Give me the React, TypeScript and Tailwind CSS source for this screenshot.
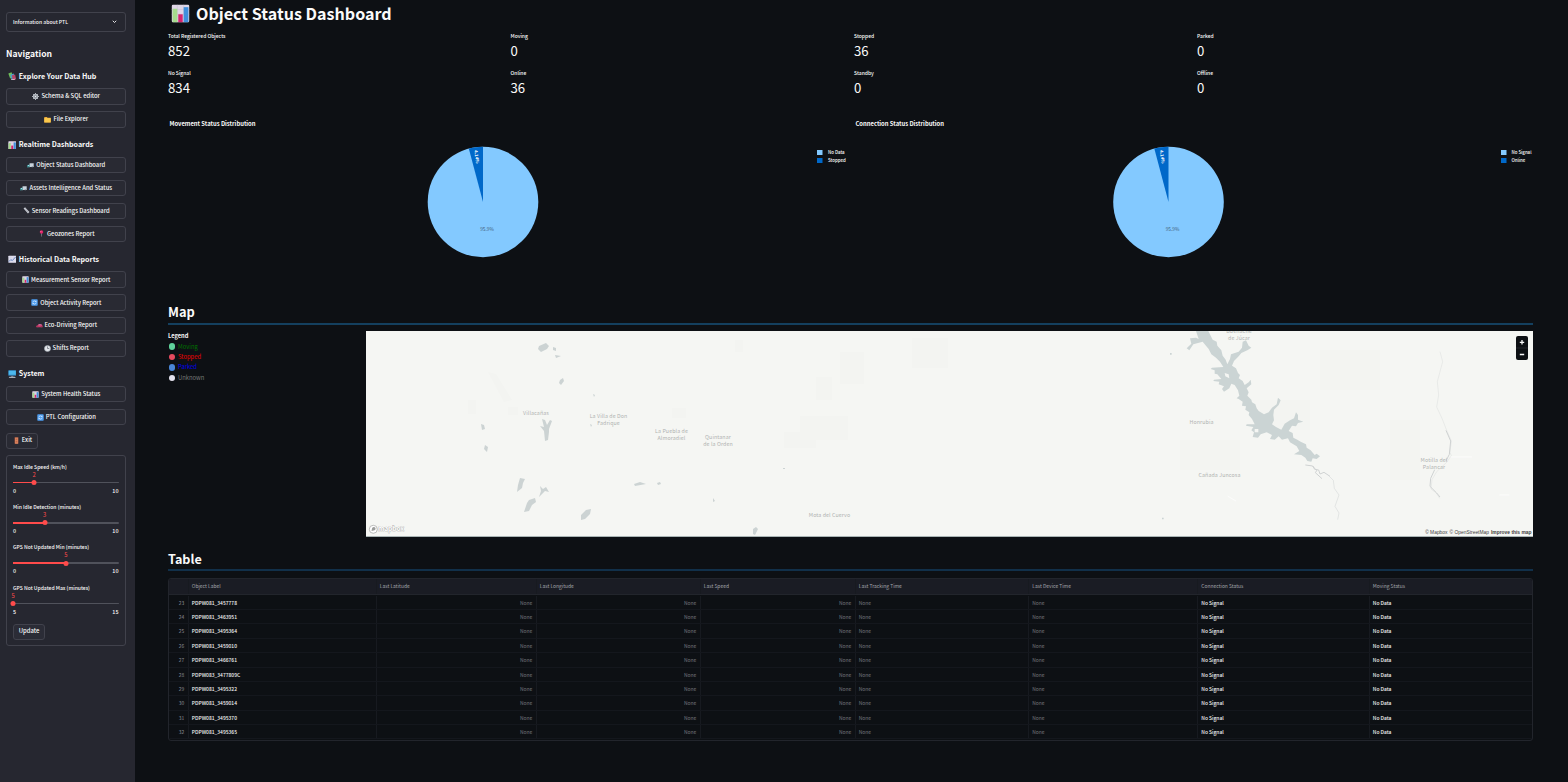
import React from "react";

type IconName =
  | "chart" | "books" | "gear" | "folder" | "truck" | "ruler" | "pin" | "trend"
  | "refresh" | "car" | "clock" | "monitor" | "door";

const drawings: Record<IconName, React.ReactNode> = {
  chart: (
    <>
      <rect x="1" y="1" width="22" height="22" rx="1.5" fill="#dfd6e6" />
      <path d="M1 7h22M1 13h22M8 1v22M16 1v22" stroke="#c9bfd6" strokeWidth=".7" />
      <rect x="2" y="6" width="6" height="17" fill="#a5dc8c" />
      <rect x="9.2" y="13" width="5.6" height="10" fill="#d6246e" />
      <rect x="16" y="4" width="6" height="19" fill="#3f8fdc" />
    </>
  ),
  books: (
    <>
      <path d="M1 4l9-3 5 14-9 3z" fill="#6fbf5a" />
      <path d="M6 8l10-4 4 14-10 3z" fill="#4aa3c9" />
      <path d="M11 9l9-2 3 13-10 3z" fill="#b5476a" />
      <path d="M8 21l12-2v2l-11 2z" fill="#e6e1ea" />
    </>
  ),
  gear: (
    <>
      <circle cx="12" cy="12" r="7.500" fill="#8d929b" stroke="#c3c9d0" strokeWidth="3.4" />
      <path d="M12 0v4M12 20v4M0 12h4M20 12h4M3.5 3.5l3 3M17.500 17.500l3 3M20.500 3.500l-3 3M3.500 20.500l3-3" stroke="#c3c9d0" strokeWidth="3" />
      <circle cx="12" cy="12" r="2.600" fill="#e6e9ec" />
    </>
  ),
  folder: (
    <>
      <path d="M1 3h9l2 3h11v16H1z" fill="#e9a73a" />
      <path d="M1 7h22v15H1z" fill="#fbc84c" />
    </>
  ),
  truck: (
    <>
      <path d="M9 4h14v13H7z" fill="#c9d3dc" />
      <path d="M3 9h6v10H1v-6z" fill="#3d9c9c" />
      <path d="M3.500 10.500h4v3H2z" fill="#9fe0ee" />
      <circle cx="6" cy="19" r="2.500" fill="#3f4650" />
      <circle cx="18" cy="18" r="2.500" fill="#3f4650" />
    </>
  ),
  ruler: (
    <>
      <path d="M2 5l5-4 15 16-5 5z" fill="#c9ccd4" />
      <path d="M9 6l-3 2M13 10l-3 2M17 14l-3 2" stroke="#777b86" strokeWidth="1.500" />
    </>
  ),
  pin: (
    <>
      <path d="M11 11h2l-.5 12h-1z" fill="#b9bec8" />
      <circle cx="12" cy="7" r="6" fill="#e3246b" />
      <circle cx="10" cy="5" r="1.800" fill="#f786ae" />
    </>
  ),
  trend: (
    <>
      <rect x="1" y="2" width="22" height="20" rx="1.500" fill="#e2e0f0" />
      <path d="M1 8h22M1 14h22M8 2v20M16 2v20" stroke="#bfc4dc" strokeWidth=".8" />
      <path d="M2 19l6-6 4 3 10-11" fill="none" stroke="#5a79b8" strokeWidth="2.400" />
    </>
  ),
  refresh: (
    <>
      <rect x="1" y="1" width="22" height="22" rx="2.500" fill="#4b9cf0" />
      <path d="M6 12a6 6 0 0 1 11-3M18 12a6 6 0 0 1-11 3" fill="none" stroke="#e8f3ff" strokeWidth="2.400" />
      <path d="M18.500 5v5h-5zM5.500 19v-5h5z" fill="#e8f3ff" />
    </>
  ),
  car: (
    <>
      <path d="M1 13l4-1 4-5h9l4 5 1 6H1z" fill="#d63568" />
      <path d="M8 11.500l2.500-3h3v3zM15 8.500h2.500l2 3H15z" fill="#7fc4e0" />
      <circle cx="6.500" cy="18" r="2.600" fill="#50424e" />
      <circle cx="18" cy="18" r="2.600" fill="#50424e" />
    </>
  ),
  clock: (
    <>
      <circle cx="12" cy="12" r="10.500" fill="#e3e6ea" stroke="#a2a9b3" strokeWidth="2" />
      <path d="M12 5v7h6" fill="none" stroke="#555c68" strokeWidth="2.200" />
    </>
  ),
  monitor: (
    <>
      <rect x="1" y="1" width="22" height="15.500" rx="1" fill="#2d7fb8" />
      <rect x="2" y="2" width="20" height="11.500" fill="#4cb8ee" />
      <path d="M9 16.500h6v3H9z" fill="#7b8794" />
      <path d="M4 19h16l2 4H2z" fill="#a7adb8" />
    </>
  ),
  door: (
    <>
      <rect x="5" y="1" width="14" height="22" fill="#8a4a3c" />
      <rect x="7" y="2" width="10" height="21" fill="#e08a63" />
      <path d="M9 5h6v6H9zM9 14h6v5H9z" fill="#c06a4a" />
    </>
  ),
};

function Icon({ name, className }: { name: IconName; className: string }) {
  return (
    <svg viewBox="0 0 24 24" className={`shrink-0 ${className}`}>
      {drawings[name]}
    </svg>
  );
}

const sections: { icon: IconName; title: string; items: [IconName, string][] }[] = [
  {
    icon: "books",
    title: "Explore Your Data Hub",
    items: [["gear", "Schema & SQL editor"], ["folder", "File Explorer"]],
  },
  {
    icon: "chart",
    title: "Realtime Dashboards",
    items: [
      ["truck", "Object Status Dashboard"],
      ["truck", "Assets Intelligence And Status"],
      ["ruler", "Sensor Readings Dashboard"],
      ["pin", "Geozones Report"],
    ],
  },
  {
    icon: "trend",
    title: "Historical Data Reports",
    items: [
      ["chart", "Measurement Sensor Report"],
      ["refresh", "Object Activity Report"],
      ["car", "Eco-Driving Report"],
      ["clock", "Shifts Report"],
    ],
  },
  {
    icon: "monitor",
    title: "System",
    items: [["chart", "System Health Status"], ["refresh", "PTL Configuration"]],
  },
];

const sliders = [
  { label: "Max Idle Speed (km/h)", min: 0, max: 10, value: 2 },
  { label: "Min Idle Detection (minutes)", min: 0, max: 10, value: 3 },
  { label: "GPS Not Updated Min (minutes)", min: 0, max: 10, value: 5 },
  { label: "GPS Not Updated Max (minutes)", min: 5, max: 15, value: 5 },
];

function Slider({ label, min, max, value }: (typeof sliders)[number]) {
  const pct = `${((value - min) / (max - min)) * 100}%`;
  return (
    <div className="h-[40.2px]">
      <div className="h-[8px] text-[5.050px] leading-[8px] font-medium">{label}</div>
      <div className="relative mt-[11px] h-[1.5px] rounded bg-[#50525b]">
        <div className="h-full bg-[#ff4b4b]" style={{ width: pct }} />
        <div className="absolute top-[-1.8px] size-[5px] -translate-x-1/2 rounded-full bg-[#ff4b4b]" style={{ left: pct }} />
        <div className="absolute top-[-11px] -translate-x-1/2 text-[5.8px] leading-[8px] text-[#ff4b4b]" style={{ left: pct }}>
          {value}
        </div>
      </div>
      <div className="mt-[3.5px] flex justify-between text-[5.4px] leading-[8px] font-medium">
        <span>{min}</span>
        <span>{max}</span>
      </div>
    </div>
  );
}

function Sidebar() {
  return (
    <aside className="h-full w-[135px] shrink-0 bg-[#262730] pt-[12px] pr-[9.500px] pl-[6px]">
      <div className="flex h-[19.500px] items-center justify-between rounded-[3px] border border-[#41424c] px-[6px] text-[5.100px] font-medium">
        <span>Information about PTL</span>
        <svg viewBox="0 0 10 10" className="mr-[2px] size-[5px]">
          <path d="M1.500 3.500L5 7l3.500-3.500" fill="none" stroke="#fafafa" strokeWidth="1.800" />
        </svg>
      </div>
      <h2 className="mt-[13.500px] h-[16px] text-[8.600px] leading-[16px] font-bold">Navigation</h2>
      <nav className="mt-[7px] flex flex-col gap-[9.250px]">
        {sections.map((s) => (
          <section key={s.title}>
            <h3 className="flex h-[16px] items-center gap-[2.800px] pl-[1.500px] text-[7.100px] font-bold whitespace-nowrap">
              <Icon name={s.icon} className="size-[8.500px]" />
              {s.title}
            </h3>
            <div className="mt-[4.200px] flex flex-col gap-[6.450px]">
              {s.items.map(([icon, text]) => (
                <button
                  key={text}
                  className="flex h-[16.450px] w-full items-center justify-center gap-[2px] rounded-[3px] border border-[#41424c] bg-[#292a33] pl-[1px] text-[5.850px] leading-[10px] font-medium whitespace-nowrap"
                >
                  <Icon name={icon} className="size-[7px]" />
                  {text}
                </button>
              ))}
            </div>
          </section>
        ))}
      </nav>
      <button className="mt-[7.300px] flex h-[16.450px] w-[32px] items-center justify-center gap-[2px] rounded-[3px] border border-[#41424c] bg-[#292a33] pl-[1px] text-[5.850px] font-medium">
        <Icon name="door" className="size-[7px]" />
        Exit
      </button>
      <div className="mt-[6.500px] h-[191px] rounded-[3px] border border-[#41424c] px-[6px] pt-[6.500px]">
        {sliders.map((s) => (
          <Slider key={s.label} {...s} />
        ))}
        <button className="flex h-[16px] w-[32px] items-center justify-center rounded-[3px] border border-[#41424c] bg-[#2b2c36] text-[5.900px] font-medium">
          Update
        </button>
      </div>
    </aside>
  );
}

const metrics = [
  ["Total Registered Objects", "852"], ["Moving", "0"], ["Stopped", "36"], ["Parked", "0"],
  ["No Signal", "834"], ["Online", "36"], ["Standby", "0"], ["Offline", "0"],
];

function PieChart({ title, legend, shift }: { title: string; legend: [string, string]; shift: number }) {
  return (
    <div className="flex-1">
      <h4 className="pl-[1.500px] text-[5.850px] leading-[10px] font-bold">{title}</h4>
      <svg viewBox="0 0 680 130" className="mt-[11px] block h-[130px] w-[680px]">
        <g transform={`translate(${shift} 0)`}>
          <circle cx="315" cy="62" r="55.300" fill="#83c9ff" />
          <path d="M315 62L300.800 8.550A55.300 55.300 0 0 1 315 6.700Z" fill="#0068c9" />
          <text x="319" y="91.300" textAnchor="middle" fontSize="4.800" fill="#44627c">95.9%</text>
          <text transform="translate(307.200 17) rotate(82.500)" textAnchor="middle" fontSize="4.500" fontWeight="700" fill="#ffffff">4.14%</text>
        </g>
        <g fontSize="4.400" fontWeight="500" fill="#fafafa">
          <rect x={649 + (shift ? -2 : 0)} y="10" width="5.500" height="5" fill="#83c9ff" />
          <rect x={649 + (shift ? -2 : 0)} y="18" width="5.500" height="5" fill="#0068c9" />
          <text x={660 + (shift ? -2.500 : 0)} y="14.400">{legend[0]}</text>
          <text x={660 + (shift ? -2.500 : 0)} y="22.300">{legend[1]}</text>
        </g>
      </svg>
    </div>
  );
}

const mapLegend = [
  { label: "Moving", dot: "bg-[#5fd39b]", text: "text-[#007000]" },
  { label: "Stopped", dot: "bg-[#e84a5f]", text: "text-[#ee0000]" },
  { label: "Parked", dot: "bg-[#4a86d8]", text: "text-[#0000ee]" },
  { label: "Unknown", dot: "bg-[#e4e2ee]", text: "text-[#777777]" },
];

function MapCanvas() {
  return (
    <svg viewBox="366 331 1167 205.500" className="block h-[205.500px] w-[1167px]">
      <rect x="366" y="331" width="1167" height="206" fill="#f5f6f3" />
      <g fill="#f3f4f1">
        <path d="M840 352h24v32h-24zM816 377h16v23h-16zM800 416h48v24h-48zM784 432h32v16h-32zM912 338h36v30h-36zM1320 350h60v40h-60zM1260 400h50v30h-50zM1390 420h30v60h-30zM1180 440h60v30h-60z" />
        <path d="M488 372l8 2 16 26-8 2zM468 400h8v14h-8zM508 407h10v8h-10zM672 408h14v10h-14zM735 340h8v12h-8z" />
      </g>
      <g fill="#ccd3d3">
        <path d="M539 346l7-3 3 3-2 3-6 3-3-3zM553 347l3 1v3l-3-1zM555 355l6 1-5 2zM560 380l3-2 1 3-3 4-2-2zM593 394l2 1-1 2zM590 424l2 1-1 2zM481 424l3 1 1 4-3 1zM485 445l3 2-1 5-3-3z" />
        <path d="M542 419l3 1 2 5 3-5 2 1-3 8v3l-1 8-3 1-1-10-4-5 4 1zM520 478l5 1-2 4-1 5-5 4 1-7zM540 486l3 3 3-2 3 5-4-1-6 6 2-6zM529 500l6-2 1 4-4 3-3 6-5 1 3-9zM581 515l5-5 5-1-1 5-5 5-4 1zM634 484l6-2 6 2-11 2zM657 483l3-1 1 2-3 1zM713 498l2 3-2 1zM753 529l3-2 2 2-3 6-2-1zM783 468h2v1h-2z" />
      </g>
      <g transform="translate(1140 325) scale(.33333)">
        <path
          fill="#cbd4d4"
          d="M168 18L205 18 212 32 218 44 230 50 232 62 244 76 248 92 257 104 262 118 270 102 273 88 296 80 306 68 308 50 318 46 326 62 334 68 322 76 304 84 296 94 282 108 276 122 288 130 294 144 300 150 296 160 308 168 314 180 326 172 332 164 334 178 320 190 326 202 322 212 334 224 336 232 346 238 350 250 356 258 372 268 386 262 396 248 410 238 414 218 422 226 416 240 402 254 400 270 402 286 396 298 408 306 424 314 434 296 450 286 462 280 468 262 474 270 474 284 490 290 474 294 468 304 456 302 446 318 458 324 460 338 472 344 482 350 498 358 500 368 512 376 524 390 530 386 540 394 530 402 518 400 514 410 502 408 496 398 484 390 462 388 478 378 470 364 450 352 444 340 426 344 416 334 404 344 390 342 396 330 380 322 362 328 354 338 338 336 342 322 334 316 340 306 318 302 320 298 344 298 336 282 326 270 328 262 316 254 318 244 306 242 308 230 296 222 290 220 298 212 294 196 284 180 274 176 268 190 252 200 246 192 252 184 236 178 238 170 220 168 222 164 244 162 232 148 224 146 224 136 212 132 216 128 250 126 240 110 228 98 214 88 206 72 196 60 188 50 174 54 160 58 148 76 140 70 154 56 150 40 168 38 176 42z"
        />
        <path d="M254 144l12 4 2 12-12-6zM344 312h11v10h-11z" fill="#f5f6f3" />
        <g fill="none" stroke="#cfd2d2" strokeWidth="3">
          <path d="M496 420l22 3 6 10 12 2 4 12 12-5 18 12M518 423l12 14-4 6 20 18" />
          <path d="M568 454l12 12 3 24 14 20-12 34 12 20-4 20" strokeWidth="1.500" />
          <path d="M900 80l8 30-16 60 4 40-6 36 16 34 14 36 14 32-4 34 4 10-14 20-30 28-14 24-3 28 16 12 10 16" strokeWidth="1" />
          <path d="M918 316l14 32-4 40-10 20M884 434l-12 26-2 24 20 20 10 12" strokeWidth="3" />
        </g>
        <path d="M264 514l24 14M1078 510h30M932 396h64" stroke="#fcfcfb" strokeWidth="3" />
        <path d="M90 84h5v5h-5zM66 578h5v5h-5z" fill="#cbd4d4" />
      </g>
      <g fill="#b0b2b1" fontSize="5.300" textAnchor="middle" letterSpacing=".1">
        <text x="536" y="414.500">Villacañas</text>
        <text x="608.500" y="418">La Villa de Don</text>
        <text x="608.500" y="425.300">Fadrique</text>
        <text x="671.500" y="433">La Puebla de</text>
        <text x="671.500" y="440.300">Almoradiel</text>
        <text x="718" y="439">Quintanar</text>
        <text x="718" y="446.300">de la Orden</text>
        <text x="829.500" y="517">Mota del Cuervo</text>
        <text x="1239" y="332.500">Buenache</text>
        <text x="1239" y="340">de Júcar</text>
        <text x="1201.500" y="424">Honrubia</text>
        <text x="1219.500" y="477">Cañada Juncosa</text>
        <text x="1434" y="462">Motilla del</text>
        <text x="1434" y="469.300">Palancar</text>
      </g>
      <circle cx="373.300" cy="529.300" r="4" fill="#ffffff" stroke="#a9aba9" strokeWidth=".8" />
      <path d="M371.500 531l.5-2.500a1.800 1.800 0 1 1 1.800 2z" fill="#9c9e9c" />
      <text x="378" y="531.300" fontSize="7" fontWeight="700" fill="#ffffff" stroke="#9fa19f" strokeWidth=".7" paintOrder="stroke" textLength="26" lengthAdjust="spacingAndGlyphs">mapbox</text>
      <path d="M366 536.500h1167" stroke="#a9b4b4" strokeWidth="1" />
    </svg>
  );
}

const columns = "grid grid-cols-[19.500px_188px_160px_164px_155px_173.500px_169px_171.500px_1fr]";
const headers = ["", "Object Label", "Last Latitude", "Last Longitude", "Last Speed", "Last Tracking Time", "Last Device Time", "Connection Status", "Moving Status"];
const labels = [
  "PDPW081_3457778", "PDPW081_3463951", "PDPW081_3495364", "PDPW081_3459010", "PDPW081_3466761",
  "PDPW083_3477809C", "PDPW081_3495322", "PDPW081_3459014", "PDPW081_3495370", "PDPW081_3495365",
];

function StatusTable() {
  const cell = "overflow-hidden border-r border-[#171a20] px-[3.300px] whitespace-nowrap last:border-r-0";
  return (
    <div className="mt-[7px] h-[163px] overflow-hidden rounded-[3px] border border-[#22252c] text-[4.950px]">
      <div className={`${columns} h-[16.300px] border-b border-[#22252c] bg-[#1a1c24] leading-[14px] text-[#a3a5ab]`}>
        {headers.map((h) => (
          <div key={h} className={cell}>{h}</div>
        ))}
      </div>
      <div className="pt-[.5px]">
        {labels.map((label, i) => (
          <div key={label} className={`${columns} h-[14.350px] border-b border-[#14171d] leading-[14px] font-medium text-[#f0f1f2]`}>
            <div className={`${cell} text-right font-normal text-[#8c8e94]`}>{23 + i}</div>
            <div className={cell}>{label}</div>
            <div className={`${cell} text-right font-normal text-[#74767c]`}>None</div>
            <div className={`${cell} text-right font-normal text-[#74767c]`}>None</div>
            <div className={`${cell} text-right font-normal text-[#74767c]`}>None</div>
            <div className={`${cell} font-normal text-[#74767c]`}>None</div>
            <div className={`${cell} font-normal text-[#74767c]`}>None</div>
            <div className={cell}>No Signal</div>
            <div className={cell}>No Data</div>
          </div>
        ))}
      </div>
    </div>
  );
}

export default function App() {
  return (
    <div className="flex h-[782px] w-[1568px] overflow-hidden bg-[#0d1014] font-['Noto_Sans_CJK_SC','Open_Sans',sans-serif] text-[#fafafa]">
      <Sidebar />
      <main className="w-[1398px] pl-[33px]">
        <h1 className="flex h-[27px] items-center gap-[6.500px] pl-[2.500px] text-[16.100px] font-bold">
          <Icon name="chart" className="size-[19px]" />
          Object Status Dashboard
        </h1>
        <div className="mt-[4px] grid grid-cols-[342.500px_343.500px_343px_1fr]">
          {metrics.map(([label, value], i) => (
            <div key={i} className="h-[37px]">
              <div className="text-[5px] leading-[10px] font-medium">{label}</div>
              <div className="text-[13.200px] leading-[20px]">{value}</div>
            </div>
          ))}
        </div>
        <div className="mt-[14px] flex gap-[6px]">
          <PieChart title="Movement Status Distribution" legend={["No Data", "Stopped"]} shift={0} />
          <PieChart title="Connection Status Distribution" legend={["No Signal", "Online"]} shift={-0.5} />
        </div>
        <h2 className="mt-[32px] h-[23px] text-[12.800px] leading-[19px] font-bold">Map</h2>
        <div className="mt-[-2px] h-[2px] bg-[#14405f]" />
        <div className="mt-[6px] flex">
          <div className="w-[198px]">
            <div className="text-[5.700px] leading-[10.500px] font-bold">Legend</div>
            {mapLegend.map((m) => (
              <div key={m.label} className="flex h-[10.400px] items-center gap-[3px] pl-[.5px] text-[5.850px] leading-[10px]">
                <span className={`size-[6.500px] rounded-full ${m.dot}`} />
                <span className={m.text}>{m.label}</span>
              </div>
            ))}
          </div>
          <div className="relative h-[206px] w-[1167px]">
            <MapCanvas />
            <div className="absolute top-[5px] right-[5px] flex w-[12px] flex-col rounded-[2px] bg-[#0d1014]">
              <svg viewBox="0 0 12 24" className="h-[24px] w-[12px]">
                <path d="M3.800 6.300h4.400M6 4.100v4.400M3.800 18.500h4.400" stroke="#fafafa" strokeWidth="1.300" />
                <path d="M0 12h12" stroke="#30333a" strokeWidth=".6" />
              </svg>
            </div>
            <div className="absolute right-[1.500px] bottom-[1px] flex gap-[2px] font-['Liberation_Sans',sans-serif] text-[4.900px] leading-[7px] whitespace-nowrap text-[#404040]">
              <span>© Mapbox</span>
              <span>© OpenStreetMap</span>
              <span className="font-bold">Improve this map</span>
            </div>
          </div>
        </div>
        <h2 className="mt-[13px] h-[20px] text-[12.600px] leading-[17px] font-bold">Table</h2>
        <div className="mt-[-1px] h-[2px] bg-[#11304a]" />
        <StatusTable />
      </main>
    </div>
  );
}
